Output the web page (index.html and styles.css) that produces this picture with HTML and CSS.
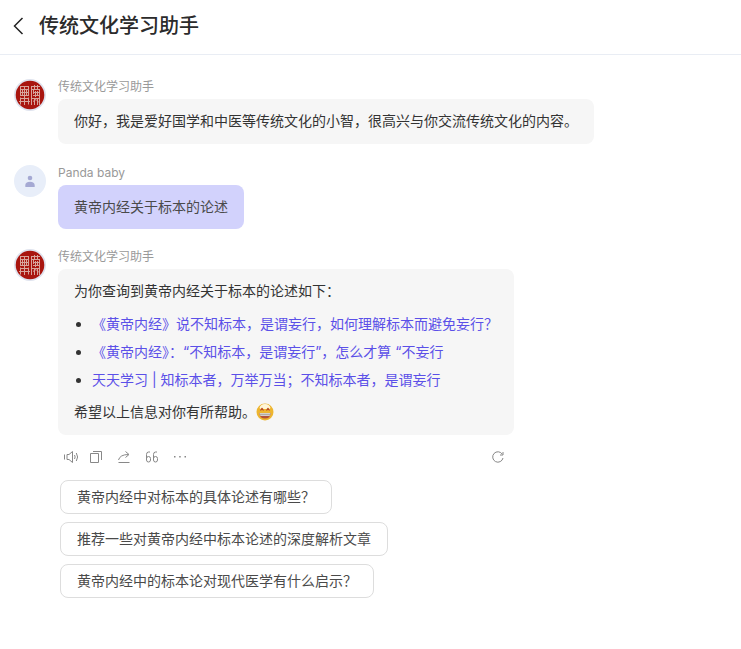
FILE: index.html
```html
<!DOCTYPE html>
<html lang="zh-CN">
<head>
  <meta charset="UTF-8" />
  <meta name="viewport" content="width=device-width, initial-scale=1.0"/>
  <title>传统文化学习助手</title>
  <link rel="stylesheet" href="styles.css">
</head>

<body>
  <!-- Shared drawings -->
  <svg class="sprite" aria-hidden="true">
    <symbol id="seal" viewBox="0 0 32 32">
      <circle cx="16" cy="16" r="16" fill="#dfe3ee"/>
      <circle cx="16" cy="16" r="14.3" fill="#a9160f"/>
      <g fill="none" stroke="#d8a39b" stroke-width="1">
        <path d="M6 7.500h9M6.500 10.500h8M6 13.500h9M6.500 7.500v9M14.500 7.500v9M10.500 7v19M6 16.500h9M6.500 18.500v7M14.500 18.500v7M6.500 19.500h8M5 22.500h11M8.500 10.500v6M12.500 10.500v6"/>
        <path d="M17 7.500h9M17.500 7v19M20.500 6v5M23.500 6v5M17 10.500h9M19 13.500h7M25.500 11v15M19 16.500h7M21.500 12v6M18 19.500h8M20.500 20v6M23.500 20v6M19 22.500l3-2M22 20.500l3 3M19.500 11v4M23.500 12v4"/>
      </g>
    </symbol>
  </svg>

  <header class="header">
    <button type="button" class="back" aria-label="返回">
      <svg width="12" height="18" viewBox="0 0 12 18"><path d="M10.500 1L2.500 9l8 8" fill="none" stroke="#222" stroke-width="1.500"/></svg>
    </button>
    <h1 class="title">传统文化学习助手</h1>
  </header>

  <main class="chat">
    <div class="message bot">
      <svg class="avatar"><use href="#seal"/></svg>
      <div class="content">
        <div class="name">传统文化学习助手</div>
        <div class="bubble">
          <p>你好，我是爱好国学和中医等传统文化的小智，很高兴与你交流传统文化的内容。</p>
        </div>
      </div>
    </div>

    <div class="message user">
      <svg class="avatar" viewBox="0 0 32 32">
        <circle cx="16" cy="16" r="16" fill="#e8eef9"/>
        <circle cx="16" cy="13" r="2.300" fill="#a5a9d3"/>
        <path d="M11.300 21.500v-1.300c0-2 1.700-3.400 4.700-3.400s4.700 1.400 4.700 3.400v1.300q0 .5-.5.5h-8.400q-.5 0-.5-.5z" fill="#a5a9d3"/>
      </svg>
      <div class="content">
        <div class="name">Panda baby</div>
        <div class="bubble">
          <p>黄帝内经关于标本的论述</p>
        </div>
      </div>
    </div>

    <div class="message bot">
      <svg class="avatar"><use href="#seal"/></svg>
      <div class="content">
        <div class="name">传统文化学习助手</div>
        <div class="bubble">
          <p>为你查询到黄帝内经关于标本的论述如下：</p>
          <ul class="links">
            <li><a href="#">《黄帝内经》说不知标本，是谓妄行，如何理解标本而避免妄行？</a></li>
            <li><a href="#">《黄帝内经》：“不知标本，是谓妄行”，怎么才算 “不妄行</a></li>
            <li><a href="#">天天学习 | 知标本者，万举万当；不知标本者，是谓妄行</a></li>
          </ul>
          <p>希望以上信息对你有所帮助。<svg class="emoji" viewBox="0 0 18 18" role="img" aria-label="笑脸">
              <circle cx="9" cy="9" r="8.500" fill="#edb52f"/>
              <path d="M3.500 5q1-4 5.500-4t5.500 4l-1.200 1q-1.300-2-2.800 0h-3q-1.500-2-2.800 0z" fill="#fff6d8"/>
              <path d="M4.500 7.500l1.500-2 1.500 2M10.500 7.500l1.500-2 1.500 2" fill="none" stroke="#b8472a" stroke-width="1.200"/>
              <path d="M3.200 10h11.600q-.5 5.500-5.800 5.500t-5.800-5.500z" fill="#b5523a"/>
              <path d="M3.500 10h11q0 3-1.500 3h-8q-1.500 0-1.500-3z" fill="#d3d0cd"/>
              <path d="M4 11.500h10" stroke="#9d928b" stroke-width=".6"/>
            </svg></p>
        </div>

        <div class="toolbar">
          <button type="button" aria-label="朗读">
            <svg viewBox="0 0 16 16"><path d="M7 5.500h2l3.500-3v11l-3.500-3H7zM4.500 5.500v5M14.500 6q1.300 2 0 4M16.300 4q2.600 4 0 8"/></svg>
          </button>
          <button type="button" aria-label="复制">
            <svg viewBox="0 0 16 16"><path d="M2.500 4.500h8v9h-8zM5 2.500h8.500V11"/></svg>
          </button>
          <button type="button" aria-label="分享">
            <svg viewBox="0 0 16 16"><path d="M2.500 11Q4 5.500 12.500 5.500M9.500 2.500l3.500 3-3.500 3M2.500 13.500h11"/></svg>
          </button>
          <button type="button" aria-label="引用">
            <svg viewBox="0 0 16 16"><path d="M6 3H4.500Q2.500 3 2.500 5.500V11q0 2 2 2T6.500 11V9.500q0-2-2-2t-2 2M13 3h-1.500q-2 0-2 2.500V11q0 2 2 2t2-2V9.500q0-2-2-2t-2 2"/></svg>
          </button>
          <button type="button" aria-label="更多">
            <svg viewBox="0 0 16 16"><path d="M2 7.750h1.500M7.200 7.750h1.500M12.500 7.750H14" stroke-width="1.500"/></svg>
          </button>
          <button type="button" class="refresh" aria-label="重新生成">
            <svg viewBox="0 0 16 16"><path d="M12.300 5.200A5.200 5.200 0 1 0 13 9M13 3v3h-3"/></svg>
          </button>
        </div>

        <div class="suggestions">
          <button type="button">黄帝内经中对标本的具体论述有哪些？</button>
          <button type="button">推荐一些对黄帝内经中标本论述的深度解析文章</button>
          <button type="button">黄帝内经中的标本论对现代医学有什么启示？</button>
        </div>
      </div>
    </div>
  </main>
</body>
</html>
```

FILE: styles.css
```css
* {
  box-sizing: border-box;
}

body {
  margin: 0;
  font-family: Inter, 'Noto Sans CJK SC', sans-serif;
  font-size: 14px;
  line-height: 20px;
  color: #333;
  background: #fff;
}

p {
  margin: 0;
}

button {
  font: inherit;
  color: inherit;
  cursor: pointer;
}

.sprite {
  position: absolute;
  width: 0;
  height: 0;
}

.header {
  display: flex;
  align-items: center;
  gap: 15px;
  padding: 11px 12px 13px;
  border-bottom: 1px solid #e9edf4;
}

.back {
  display: flex;
  padding: 0;
  border: none;
  background: none;
}

.title {
  margin: 0;
  font-size: 20px;
  line-height: 30px;
  font-weight: 500;
  color: #2b2b2b;
}

.chat {
  padding: 24px 14px;
}

.message {
  display: flex;
  align-items: flex-start;
  gap: 12px;
  margin-bottom: 20px;
}

.message.bot {
  margin-bottom: 21px;
}

.avatar {
  flex: none;
  width: 32px;
  height: 32px;
}

.content {
  min-width: 0;
}

.name {
  margin-bottom: 4px;
  font-size: 12px;
  line-height: 16px;
  color: #999;
}

.bubble {
  width: fit-content;
  padding: 12px 16px 13px;
  border-radius: 8px;
  background: #f6f6f6;
}

.user .bubble {
  padding-bottom: 12px;
  color: #4a4a4a;
  background: #d2d2fc;
}

.links {
  margin: 9px 0 8px;
  padding-left: 18px;
  line-height: 28px;
}

.links a {
  color: #5b50e8;
  text-decoration: none;
}

.emoji {
  width: 18px;
  height: 18px;
  vertical-align: -4px;
}

.toolbar {
  display: flex;
  gap: 12px;
  padding: 14px 8px 15px 2px;
}

.toolbar button {
  display: flex;
  padding: 0;
  border: none;
  background: none;
}

.toolbar svg {
  width: 16px;
  height: 16px;
  overflow: visible;
  fill: none;
  stroke: #888;
  stroke-width: 1;
}

.toolbar .refresh {
  margin-left: auto;
}

.suggestions {
  display: flex;
  flex-direction: column;
  align-items: flex-start;
  gap: 8px;
  padding-left: 2px;
}

.suggestions button {
  padding: 6px 16px;
  border: 1px solid #ddd;
  border-radius: 8px;
  text-align: left;
  color: #4a4a4a;
  background: #fff;
}
```
